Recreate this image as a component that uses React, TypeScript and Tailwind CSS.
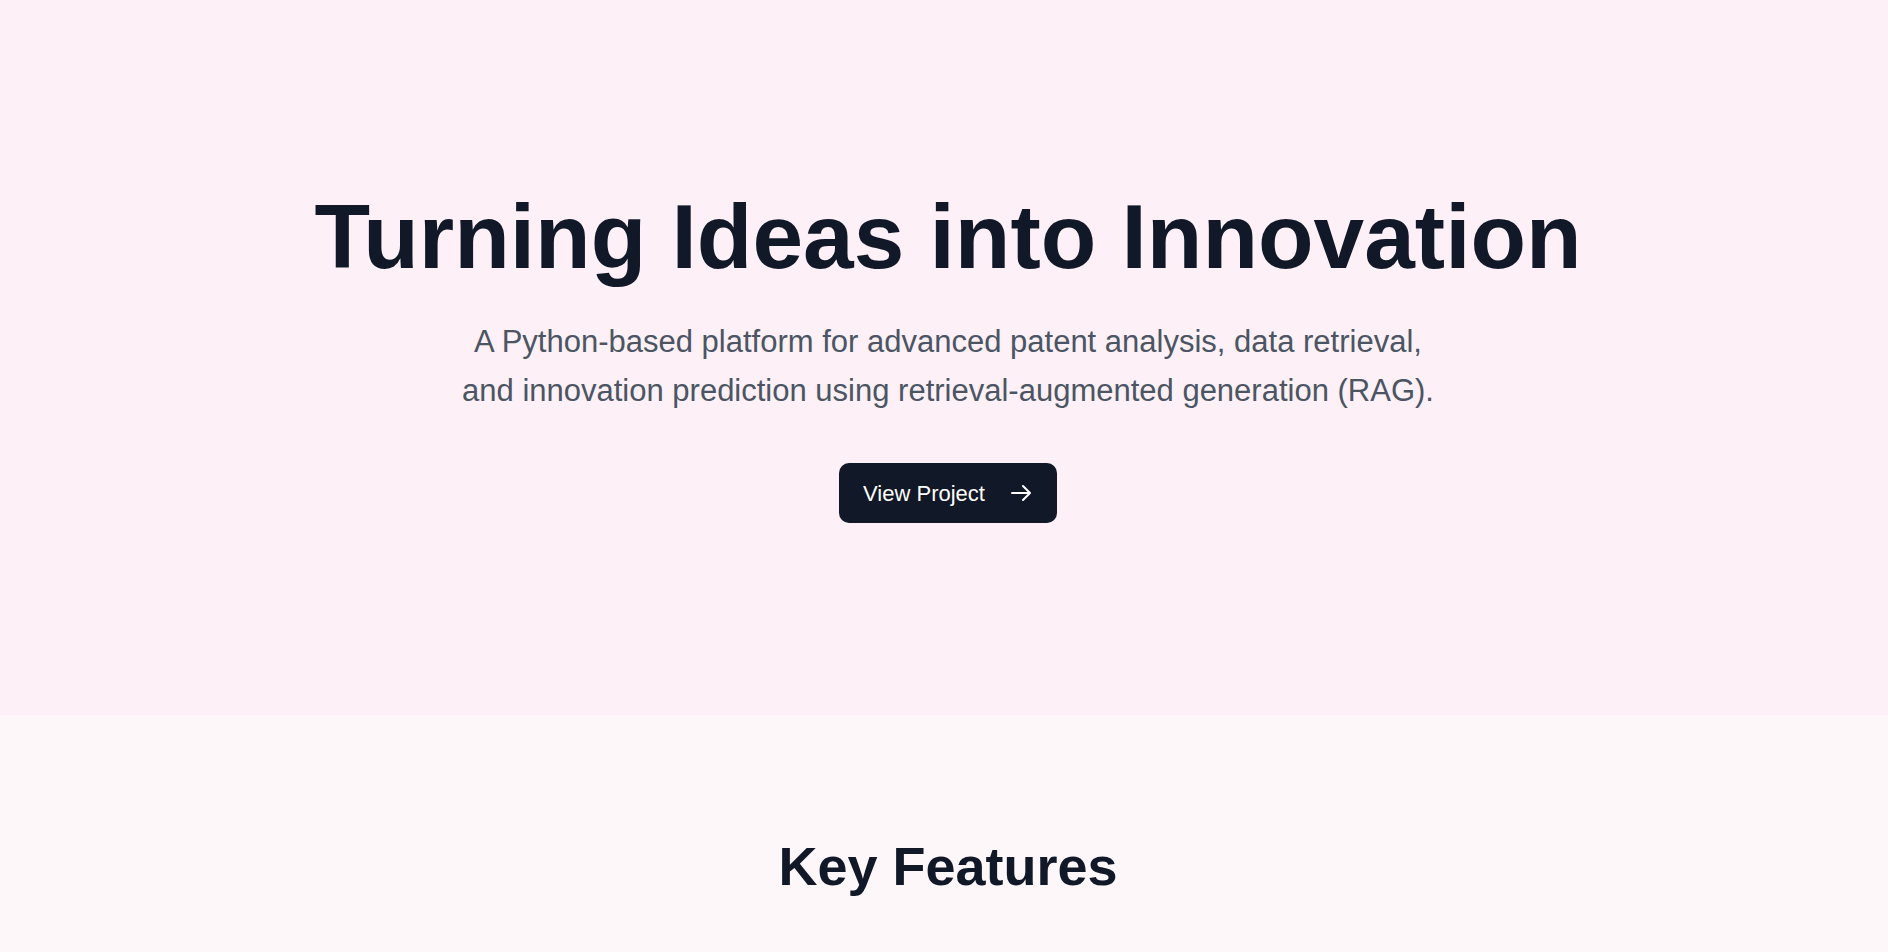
import { HiOutlineArrowRight } from "react-icons/hi";

export default function App() {
  return (
    <div className="min-h-screen w-full bg-[#fdf7fa] font-['Liberation_Sans',Arial,sans-serif]">
      <section className="flex h-[715px] flex-col items-center bg-[#fdf0f6] pl-[32px] pr-[24px] pt-[191px]">
        <h1 className="text-[91px] font-bold leading-none text-[#111827]">
          Turning Ideas into Innovation
        </h1>
        <p className="mt-[35px] max-w-[1100px] text-center text-[31px] leading-[49px] text-[#4b5563]">
          A Python-based platform for advanced patent analysis, data retrieval,
          <br />
          and innovation prediction using retrieval-augmented generation (RAG).
        </p>
        <button className="mt-[48px] flex h-[60px] items-center gap-6 rounded-[10px] bg-[#111827] px-6 text-[22px] font-medium text-white">
          View Project
          <HiOutlineArrowRight className="h-6 w-6" />
        </button>
      </section>
      <section className="flex flex-col items-center pl-[8px] pt-[124px]">
        <h2 className="text-[54px] font-bold leading-none text-[#111827]">Key Features</h2>
      </section>
    </div>
  );
}
